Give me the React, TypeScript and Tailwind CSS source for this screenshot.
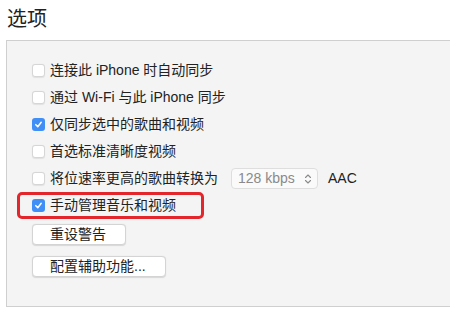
// Options panel — iTunes-style device sync settings (zh-CN)

import type { ReactNode } from 'react';

const FONT = { fontFamily: '"Liberation Sans", "Noto Sans CJK SC", sans-serif' };

function Checkbox({ checked }: { checked: boolean }) {
  if (checked) {
    return (
      <span className="flex h-[13px] w-[13px] shrink-0 items-center justify-center rounded-[3px] bg-[#3f8ff7]">
        <svg width="9" height="9" viewBox="0 0 10 10" fill="none">
          <path d="M2 5.2 L4.2 7.4 L8 2.6" stroke="#fff" strokeWidth="1.7" strokeLinecap="round" strokeLinejoin="round" />
        </svg>
      </span>
    );
  }
  return (
    <span className="h-[13px] w-[13px] shrink-0 rounded-[3px] border border-[#d6d6d6] bg-white shadow-[0_0.5px_1px_rgba(0,0,0,0.08)]" />
  );
}

function Row({ checked, children }: { checked: boolean; children: ReactNode }) {
  return (
    <div className="flex h-[27px] items-center gap-[5px] text-[14px] text-[#222]">
      <Checkbox checked={checked} />
      {children}
    </div>
  );
}

function Button({ label }: { label: string }) {
  return (
    <button className="flex h-[21px] items-center rounded-[4px] border border-[#d4d4d4] bg-white pl-[17px] pr-[19px] text-[14px] text-[#222] shadow-[0_0.5px_1px_rgba(0,0,0,0.12)]">
      {label}
    </button>
  );
}

export default function App() {
  return (
    <div className="h-[316px] w-[450px] overflow-hidden bg-white" style={FONT}>
      <h1 className="pl-[7px] pt-[7px] text-[20px] leading-[24px] text-[#222]">选项</h1>

      <div className="ml-[6px] mt-[9px] h-[267px] w-[470px] border border-[#cfcfcf] bg-[#f4f4f4] pl-[25px] pt-[16px]">
        <Row checked={false}>连接此 iPhone 时自动同步</Row>
        <Row checked={false}>通过 Wi-Fi 与此 iPhone 同步</Row>
        <Row checked>仅同步选中的歌曲和视频</Row>
        <Row checked={false}>首选标准清晰度视频</Row>
        <Row checked={false}>
          <span>将位速率更高的歌曲转换为</span>
          <span className="ml-[8px] flex h-[21px] w-[87px] items-center justify-between rounded-[4px] border border-[#dedede] bg-[#fafafa] pl-[6px] pr-[5px] text-[#8a8a8a]">
            128 kbps
            <svg width="8" height="12" viewBox="0 0 8 12" fill="none">
              <path d="M1.5 4.5 L4 2 L6.5 4.5 M1.5 7.5 L4 10 L6.5 7.5" stroke="#8a8a8a" strokeWidth="1.1" strokeLinecap="round" strokeLinejoin="round" />
            </svg>
          </span>
          <span className="ml-[5px]">AAC</span>
        </Row>
        <div className="relative">
          <Row checked>手动管理音乐和视频</Row>
          <div className="pointer-events-none absolute left-[-15px] top-0 h-[27px] w-[187px] rounded-[5px] border-[3px] border-[#e3262c]" />
        </div>

        <div className="mt-[5px] flex flex-col items-start gap-[11px]">
          <Button label="重设警告" />
          <Button label="配置辅助功能..." />
        </div>
      </div>
    </div>
  );
}
